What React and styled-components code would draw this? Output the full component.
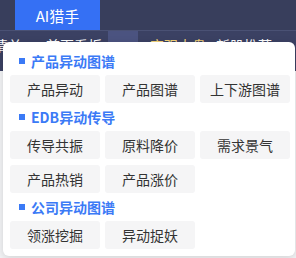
import { createGlobalStyle } from "styled-components";
import styled from "styled-components";

const Global = createGlobalStyle`
    body {
        margin: 0;
        background: #f3f4f6;
        font-family: "Noto Sans CJK SC", "Noto Sans", sans-serif;
    }
`;

const Page = styled.div`
    position: relative;
    width: 296px;
    height: 258px;
    overflow: hidden;
`;

const TopBar = styled.div`
    height: 30px;
    background: #383e5c;
    display: flex;
    padding-left: 15px;
`;

const Tab = styled.div`
    width: 85px;
    display: flex;
    align-items: center;
    justify-content: center;
    background: ${p => (p.$active ? "#3570f4" : "transparent")};
    color: #fff;
    font-size: 15px;
`;

const SubNav = styled.div`
    height: 40px;
    background: #3b4163;
    border-top: 1px solid #4a5174;
    display: flex;
    align-items: flex-start;
`;

const NavItem = styled.div`
    padding: 4px 0 0;
    margin-left: ${p => p.$ml || 0}px;
    width: ${p => p.$w || "auto"};
    background: ${p => (p.$active ? "#4b5380" : "transparent")};
    height: 40px;
    text-align: center;
    color: ${p => p.$color || "#fff"};
    font-size: 14px;
    line-height: 20px;
    white-space: nowrap;
`;

const Panel = styled.div`
    position: absolute;
    top: 42px;
    left: 3px;
    width: 292px;
    height: 214px;
    box-sizing: border-box;
    background: #fff;
    border-radius: 6px;
    box-shadow: 0 2px 8px rgba(0, 0, 0, 0.15);
    padding: 9px 4px 0 7px;
`;

const Header = styled.div`
    display: flex;
    align-items: center;
    gap: 6px;
    height: 20px;
    padding-left: 9px;
    margin: ${p => (p.$first ? "0" : "4px")} 0 4px;
    color: #3b7af6;
    font-size: 14px;
    font-weight: bold;
    &::before {
        content: "";
        width: 6px;
        height: 6px;
        background: #3b7af6;
    }
`;

const Grid = styled.div`
    display: grid;
    grid-template-columns: repeat(3, 90px);
    column-gap: 5px;
    row-gap: 6px;
`;

const Chip = styled.div`
    height: 28px;
    display: flex;
    align-items: center;
    justify-content: center;
    background: #f5f5f6;
    border-radius: 3px;
    color: #333;
    font-size: 14px;
`;

const groups = [
    { title: "产品异动图谱", items: ["产品异动", "产品图谱", "上下游图谱"] },
    { title: "EDB异动传导", items: ["传导共振", "原料降价", "需求景气", "产品热销", "产品涨价"] },
    { title: "公司异动图谱", items: ["领涨挖掘", "异动捉妖"] },
];

export default function App() {
    return (
        <Page>
            <Global />
            <TopBar>
                <Tab $active>AI猎手</Tab>
            </TopBar>
            <SubNav>
                <NavItem $ml={-6}>清单</NavItem>
                <NavItem $ml={24}>首页看板</NavItem>
                <NavItem $ml={6} $w="30px" $active>▾</NavItem>
                <NavItem $ml={12} $color="#f3d27a">宏观大盘</NavItem>
                <NavItem $ml={10}>新股推荐</NavItem>
            </SubNav>
            <Panel>
                {groups.map((g, i) => (
                    <div key={g.title}>
                        <Header $first={i === 0}>{g.title}</Header>
                        <Grid>
                            {g.items.map(it => <Chip key={it}>{it}</Chip>)}
                        </Grid>
                    </div>
                ))}
            </Panel>
        </Page>
    );
}
